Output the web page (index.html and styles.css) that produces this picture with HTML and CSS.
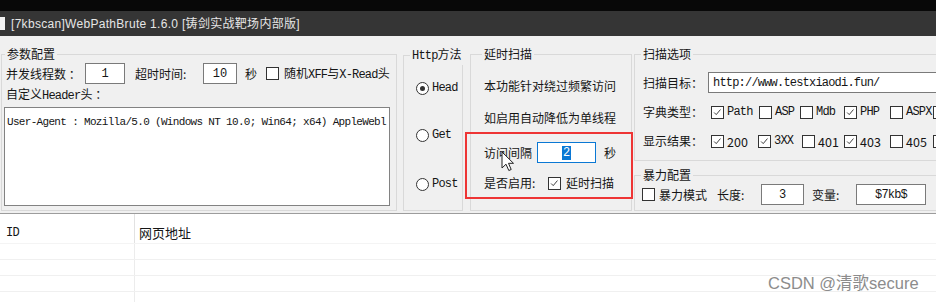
FILE: index.html
```html
<!DOCTYPE html>
<html>
<head>
<meta charset="utf-8">
<link rel="stylesheet" href="styles.css">
</head>
<body>
<div class="window">
  <div class="titlebar">
    <span class="appicon"></span>
    <span class="title">[7kbscan]WebPathBrute 1.6.0 [铸剑实战靶场内部版]</span>
  </div>

  <div class="main">
    <fieldset class="group g-params">
      <legend>参数配置</legend>
      <div class="row r-threads">
        <span class="lbl w-threads">并发线程数 ：</span>
        <span class="input in-threads">1</span>
        <span class="lbl w-timeout">超时时间:</span>
        <span class="input in-timeout">10</span>
        <span class="lbl w-sec">秒</span>
        <span class="cb"></span>
        <span class="lbl cb-text">随机<span class="mono">XFF</span>与<span class="mono">X-Read</span>头</span>
      </div>
      <div class="row r-header">
        <span class="lbl">自定义<span class="mono">Header</span>头 ：</span>
      </div>
      <div class="textarea"><span class="mono ua">User-Agent : Mozilla/5.0 (Windows NT 10.0; Win64; x64) AppleWebl</span></div>
    </fieldset>

    <fieldset class="group g-http">
      <legend><span class="mono">Http</span>方法</legend>
      <div class="radio-row rr1"><span class="radio on"></span><span class="mono rtext">Head</span></div>
      <div class="radio-row rr2"><span class="radio"></span><span class="mono rtext">Get</span></div>
      <div class="radio-row rr3"><span class="radio"></span><span class="mono rtext">Post</span></div>
    </fieldset>

    <fieldset class="group g-delay">
      <legend>延时扫描</legend>
      <div class="drow d1">本功能针对绕过频繁访问</div>
      <div class="drow d2">如启用自动降低为单线程</div>
      <div class="drow d3">
        <span class="lbl w-interval">访问间隔</span>
        <span class="input focus"><span class="sel">2</span></span>
        <span class="lbl d-sec">秒</span>
      </div>
      <div class="drow d4">
        <span class="lbl w-enable">是否启用:</span>
        <span class="cb checked"><svg viewBox="0 0 13 13" width="11" height="11"><path d="M2.5 6.5 L5 9 L10 3" fill="none" stroke="#333" stroke-width="1.1"/></svg></span>
        <span class="lbl cb-text2">延时扫描</span>
      </div>
    </fieldset>

    <div class="rightcol">
      <fieldset class="group g-scan">
        <legend>扫描选项</legend>
        <div class="srow s1">
          <span class="lbl w-slabel">扫描目标：</span>
          <span class="input in-target mono">http://www.testxiaodi.fun/</span>
        </div>
        <div class="srow s2">
          <span class="lbl w-slabel">字典类型：</span>
          <span class="opt w48"><span class="cb checked"><svg viewBox="0 0 13 13" width="11" height="11"><path d="M2.5 6.5 L5 9 L10 3" fill="none" stroke="#333" stroke-width="1.1"/></svg></span><span class="mono otext">Path</span></span>
          <span class="opt w41"><span class="cb"></span><span class="mono otext">ASP</span></span>
          <span class="opt w44"><span class="cb"></span><span class="mono otext">Mdb</span></span>
          <span class="opt w46"><span class="cb checked"><svg viewBox="0 0 13 13" width="11" height="11"><path d="M2.5 6.5 L5 9 L10 3" fill="none" stroke="#333" stroke-width="1.1"/></svg></span><span class="mono otext">PHP</span></span>
          <span class="opt w43"><span class="cb"></span><span class="mono otext">ASPX</span></span>
          <span class="opt w43"><span class="cb"></span></span>
        </div>
        <div class="srow s3">
          <span class="lbl w-slabel">显示结果：</span>
          <span class="opt w47"><span class="cb checked"><svg viewBox="0 0 13 13" width="11" height="11"><path d="M2.5 6.5 L5 9 L10 3" fill="none" stroke="#333" stroke-width="1.1"/></svg></span><span class="otext num">200</span></span>
          <span class="opt w44"><span class="cb checked"><svg viewBox="0 0 13 13" width="11" height="11"><path d="M2.5 6.5 L5 9 L10 3" fill="none" stroke="#333" stroke-width="1.1"/></svg></span><span class="otext mono">3XX</span></span>
          <span class="opt w42"><span class="cb"></span><span class="otext num">401</span></span>
          <span class="opt w46"><span class="cb checked"><svg viewBox="0 0 13 13" width="11" height="11"><path d="M2.5 6.5 L5 9 L10 3" fill="none" stroke="#333" stroke-width="1.1"/></svg></span><span class="otext num">403</span></span>
          <span class="opt w43"><span class="cb"></span><span class="otext num">405</span></span>
          <span class="opt w43"><span class="cb"></span></span>
        </div>
      </fieldset>

      <fieldset class="group g-brute">
        <legend>暴力配置</legend>
        <div class="brow">
          <span class="cb"></span>
          <span class="lbl b-mode">暴力模式</span>
          <span class="lbl b-len">长度:</span>
          <span class="input in-len">3</span>
          <span class="lbl b-var">变量:</span>
          <span class="input in-var mono">$7kb$</span>
        </div>
      </fieldset>
    </div>
  </div>

  <div class="list">
    <div class="lrow lhead">
      <div class="cell c-id mono">ID</div>
      <div class="cell c-url">网页地址</div>
    </div>
    <div class="lrow"><div class="cell c-id"></div><div class="cell c-url"></div></div>
    <div class="lrow"><div class="cell c-id"></div><div class="cell c-url"></div></div>
    <div class="lrow"><div class="cell c-id"></div><div class="cell c-url"></div></div>
    <div class="lrow"><div class="cell c-id"></div><div class="cell c-url"></div></div>
  </div>

  <div class="annot"></div>
  <svg class="cursor" width="14" height="22" viewBox="0 0 14 22"><path d="M1 1 L1 17 L5 13.2 L7.8 19.5 L10.2 18.5 L7.5 12.3 L12.5 12.3 Z" fill="#fff" stroke="#222" stroke-width="1" stroke-linejoin="round"/></svg>
  <div class="watermark">CSDN @清歌secure</div>
</div>
</body>
</html>
```

FILE: styles.css
```css
html, body {
  margin: 0;
  padding: 0;
  background: #ffffff;
}

.window {
  position: relative;
  width: 936px;
  height: 302px;
  overflow: hidden;
  font-family: "Noto Sans CJK SC", "Noto Sans", sans-serif;
  font-size: 12px;
  color: #151515;
}

.mono {
  font-family: "Liberation Mono", "Noto Sans CJK SC", monospace;
  font-size: 12px;
  letter-spacing: -0.8px;
}

/* title bar */
.titlebar {
  height: 25px;
  border-top: 11px solid #080808;
  background: #353535;
  display: flex;
  align-items: center;
  color: #e6e6e6;
  font-family: "Liberation Sans", "Noto Sans CJK SC", sans-serif;
  font-size: 12px;
}
.appicon {
  width: 5px;
  height: 13px;
  background: #f2f2f2;
  margin-right: 6px;
}
.title {
  line-height: 18px;
  letter-spacing: 0.3px;
}

/* main panel */
.main {
  height: 178px;
  box-sizing: border-box;
  background: #f0f0f0;
  border-bottom: 1px solid #9c9c9c;
  display: flex;
  align-items: flex-start;
  padding: 9px 0 0 1px;
  overflow: hidden;
}

.group {
  margin: 0;
  padding: 0;
  border: 1px solid #d9d9d9;
  min-width: 0;
  box-sizing: border-box;
  flex: none;
}
.group legend {
  padding: 0 2px;
  line-height: 18px;
  font-size: 12px;
  white-space: nowrap;
}

.lbl {
  line-height: 18px;
  white-space: nowrap;
  flex: none;
}

.input {
  box-sizing: border-box;
  height: 21px;
  background: #fff;
  border: 1px solid #7a7a7a;
  display: flex;
  align-items: center;
  justify-content: center;
  font-family: "Liberation Mono", monospace;
  font-size: 12px;
  flex: none;
}

.cb {
  box-sizing: border-box;
  width: 13px;
  height: 13px;
  border: 1px solid #333;
  background: #fff;
  display: flex;
  align-items: center;
  justify-content: center;
  flex: none;
}

/* params group */
.g-params {
  width: 396px;
  height: 166px;
}
.g-params legend { margin-left: 3px; }
.row {
  display: flex;
  align-items: center;
  padding-left: 4px;
}
.r-threads { height: 21px; }
.w-threads { width: 79px; }
.in-threads { width: 40px; }
.w-timeout { width: 68px; margin-left: 10px; }
.in-timeout { width: 34px; }
.w-sec { margin-left: 8px; width: 13px; }
.r-threads .cb { margin-left: 8px; }
.cb-text { margin-left: 5px; }
.r-header { height: 18px; margin-top: 2px; }
.textarea {
  box-sizing: border-box;
  margin: 3px 0 0 2px;
  width: 386px;
  height: 99px;
  background: #fff;
  border: 1px solid #828282;
  padding: 3px 0 0 2px;
  overflow: hidden;
  white-space: nowrap;
}
.ua {
  font-size: 11px;
  letter-spacing: -0.68px;
  line-height: 14px;
}

/* http group */
.g-http {
  width: 60px;
  height: 166px;
  margin-left: 6px;
}
.g-http legend { margin-left: 6px; }
.radio-row {
  display: flex;
  align-items: center;
  height: 18px;
  padding-left: 12px;
}
.rr1 { margin-top: 14px; }
.rr2 { margin-top: 29px; }
.rr3 { margin-top: 31px; }
.radio {
  box-sizing: border-box;
  width: 13px;
  height: 13px;
  border: 1px solid #333;
  border-radius: 50%;
  background: #fff;
  display: flex;
  align-items: center;
  justify-content: center;
  flex: none;
}
.radio.on::after {
  content: "";
  width: 5px;
  height: 5px;
  border-radius: 50%;
  background: #333;
}
.rtext { margin-left: 3px; }

/* delay group */
.g-delay {
  width: 162px;
  height: 166px;
  margin-left: 7px;
}
.g-delay legend { margin-left: 11px; }
.drow {
  display: flex;
  align-items: center;
  padding-left: 13px;
  line-height: 18px;
  white-space: nowrap;
}
.d1 { margin-top: 14px; }
.d2 { margin-top: 14px; }
.d3 { margin-top: 15px; height: 21px; }
.d4 { margin-top: 11px; }
.w-interval { width: 53px; }
.input.focus {
  width: 59px;
  border-color: #0a78d4;
}
.sel {
  background: #0a78d4;
  color: #fff;
  line-height: 14px;
  padding: 0 1px;
}
.d-sec { margin-left: 8px; }
.w-enable { width: 64px; }
.cb-text2 { margin-left: 5px; }

/* right column */
.rightcol {
  margin-left: 2px;
  width: 330px;
  flex: none;
  display: flex;
  flex-direction: column;
}
.g-scan {
  height: 116px;
}
.g-scan legend, .g-brute legend { margin-left: 6px; }
.srow {
  display: flex;
  align-items: center;
  padding-left: 8px;
  white-space: nowrap;
}
.s1 { margin-top: 9px; height: 21px; }
.s2 { margin-top: 10px; height: 18px; }
.s3 { margin-top: 11px; height: 18px; }
.w-slabel { width: 65px; }
.in-target {
  width: 260px;
  justify-content: flex-start;
  padding-left: 4px;
}
.s2 .w-slabel, .s3 .w-slabel { width: 68px; }
.opt {
  display: flex;
  align-items: center;
  flex: none;
}
.w48 { width: 48px; }
.w47 { width: 47px; }
.w46 { width: 46px; }
.w44 { width: 44px; }
.w43 { width: 43px; }
.w42 { width: 42px; }
.w41 { width: 41px; }
.otext { margin-left: 3px; }
.num { font-size: 12.5px; }

.g-brute {
  height: 45px;
  margin-top: 5px;
}
.brow {
  display: flex;
  align-items: center;
  height: 21px;
  padding-left: 7px;
  white-space: nowrap;
}
.b-mode { margin-left: 4px; }
.b-len { margin-left: 10px; width: 44px; }
.in-len { width: 43px; }
.b-var { margin-left: 8px; width: 44px; }
.in-var { width: 70px; }

/* list */
.list {
  background: #fff;
}
.lrow {
  display: flex;
  height: 16px;
  border-bottom: 1px solid #f0f0f0;
  box-sizing: border-box;
}
.lrow.lhead {
  height: 30px;
  border-bottom: 1px solid #f4f4f4;
}
.cell {
  box-sizing: border-box;
}
.c-id {
  width: 135px;
  border-right: 1px solid #ececec;
  padding-left: 6px;
}
.c-url {
  flex: 1;
  padding-left: 4px;
}
.lhead .cell {
  padding-top: 9px;
  line-height: 20px;
}
.lhead .c-url { font-size: 13px; }
.lhead .c-id { border-right-color: #e2e2e2; }

/* overlays */
.annot {
  position: absolute;
  left: 465px;
  top: 132px;
  width: 168px;
  height: 67px;
  box-sizing: border-box;
  border: 2px solid #ee3535;
}
.cursor {
  position: absolute;
  left: 501px;
  top: 151px;
}
.watermark {
  position: absolute;
  left: 768px;
  top: 272px;
  font-family: "Liberation Sans", "Noto Sans CJK SC", sans-serif;
  font-size: 16.5px;
  color: #8c8c8c;
  line-height: 22px;
}
```
